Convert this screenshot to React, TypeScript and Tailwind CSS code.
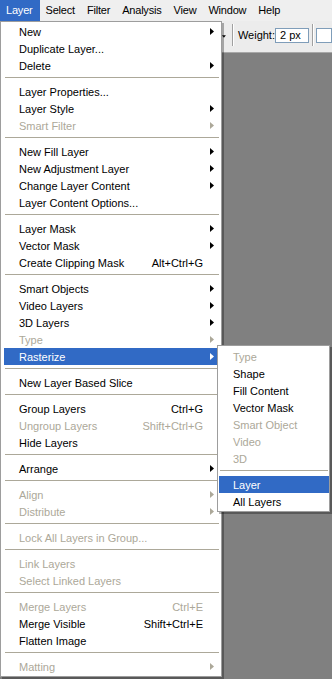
import React from "react";

type Item = { l: string; sub?: boolean; dis?: boolean; sc?: string; act?: boolean };

const mainMenu: Item[][] = [
  [{ l: "New", sub: true }, { l: "Duplicate Layer..." }, { l: "Delete", sub: true }],
  [{ l: "Layer Properties..." }, { l: "Layer Style", sub: true }, { l: "Smart Filter", sub: true, dis: true }],
  [
    { l: "New Fill Layer", sub: true },
    { l: "New Adjustment Layer", sub: true },
    { l: "Change Layer Content", sub: true },
    { l: "Layer Content Options..." },
  ],
  [{ l: "Layer Mask", sub: true }, { l: "Vector Mask", sub: true }, { l: "Create Clipping Mask", sc: "Alt+Ctrl+G" }],
  [
    { l: "Smart Objects", sub: true },
    { l: "Video Layers", sub: true },
    { l: "3D Layers", sub: true },
    { l: "Type", sub: true, dis: true },
    { l: "Rasterize", sub: true, act: true },
  ],
  [{ l: "New Layer Based Slice" }],
  [{ l: "Group Layers", sc: "Ctrl+G" }, { l: "Ungroup Layers", sc: "Shift+Ctrl+G", dis: true }, { l: "Hide Layers" }],
  [{ l: "Arrange", sub: true }],
  [{ l: "Align", sub: true, dis: true }, { l: "Distribute", sub: true, dis: true }],
  [{ l: "Lock All Layers in Group...", dis: true }],
  [{ l: "Link Layers", dis: true }, { l: "Select Linked Layers", dis: true }],
  [{ l: "Merge Layers", sc: "Ctrl+E", dis: true }, { l: "Merge Visible", sc: "Shift+Ctrl+E" }, { l: "Flatten Image" }],
  [{ l: "Matting", sub: true, dis: true }],
];

const subMenu: Item[][] = [
  [
    { l: "Type", dis: true },
    { l: "Shape" },
    { l: "Fill Content" },
    { l: "Vector Mask" },
    { l: "Smart Object", dis: true },
    { l: "Video", dis: true },
    { l: "3D", dis: true },
  ],
  [{ l: "Layer", act: true }, { l: "All Layers" }],
];

function Arrow({ color }: { color: string }) {
  return (
    <svg width="4" height="7" viewBox="0 0 4 7">
      <path d="M0 0L4 3.5L0 7Z" fill={color} />
    </svg>
  );
}

function MainRow({ it }: { it: Item }) {
  const color = it.act ? "text-white" : it.dis ? "text-[#aca899]" : "text-black";
  const arrowColor = it.act ? "#ffffff" : it.dis ? "#aca899" : "#000000";
  return (
    <div className={`flex h-[17px] items-center ml-[3px] mr-[4px] pl-[15px] ${it.act ? "bg-[#316ac5]" : ""} ${color}`}>
      <span className="flex-1 whitespace-nowrap pt-[2px] leading-[15px]">{it.l}</span>
      {it.sc && <span className="whitespace-nowrap pt-[2px] leading-[15px]">{it.sc}</span>}
      <span className="flex w-[14px] justify-end pr-[3px]">{it.sub && <Arrow color={arrowColor} />}</span>
    </div>
  );
}

function SubRow({ it }: { it: Item }) {
  const color = it.act ? "text-white" : it.dis ? "text-[#aca899]" : "text-black";
  return (
    <div className={`flex h-[17px] items-center ml-[1px] pl-[14px] ${it.act ? "bg-[#316ac5]" : ""} ${color}`}>
      <span className="whitespace-nowrap pt-[2px] leading-[15px]">{it.l}</span>
    </div>
  );
}

function Sep({ ml, mr }: { ml: string; mr: string }) {
  return (
    <div className={`pt-[3px] pb-[5px] ${ml} ${mr}`}>
      <div className="h-px bg-[#aca899]" />
    </div>
  );
}

export default function App() {
  const bar = ["Layer", "Select", "Filter", "Analysis", "View", "Window", "Help"];
  return (
    <div className="relative w-[332px] h-[679px] overflow-hidden bg-[#808080] text-[11px] font-['Liberation_Sans',Arial,sans-serif]">
      {/* menu bar */}
      <div className="flex h-[21px] items-stretch bg-[#efefef] tracking-[-0.2px]">
        {bar.map((b, i) => (
          <div
            key={b}
            className={`flex items-center ${i === 0 ? "bg-[#316ac5] pl-[6px] pr-[7px] text-white" : "px-[6px] text-black"}`}
          >
            {b}
          </div>
        ))}
      </div>
      {/* toolbar */}
      <div className="h-[32px] bg-[#ececec] border-b border-[#a8a8a8]">
        <div className="flex h-[28px] items-center pl-[222px]">
          <svg width="5" height="3" viewBox="0 0 5 3" className="mt-[2px]">
            <path d="M0 0H5L2.5 3Z" fill="#000" />
          </svg>
          <div className="ml-[6px] flex h-[22px]">
            <div className="w-px bg-[#a0a0a0]" />
            <div className="w-px bg-white" />
          </div>
          <span className="ml-[4px] w-[42px] text-black">Weight:</span>
          <div className="flex h-[15px] w-[42px] items-center border border-[#7f9db9] bg-white pl-[4px] text-black">
            2 px
          </div>
          <div className="ml-[3px] flex h-[22px]">
            <div className="w-px bg-[#a0a0a0]" />
            <div className="w-px bg-white" />
          </div>
          <div className="ml-[2px] h-[15px] w-[20px] border border-[#7f9db9] bg-white" />
        </div>
      </div>

      {/* main menu */}
      <div className="absolute left-0 top-[21px] w-[222px] border border-[#9d9d9d] bg-white pt-[1px] pb-[1px] shadow-[2px_2px_0_rgba(0,0,0,0.3)]">
        {mainMenu.map((grp, gi) => (
          <React.Fragment key={gi}>
            {gi > 0 && <Sep ml="ml-[4px]" mr="mr-[2px]" />}
            {grp.map((it) => (
              <MainRow key={it.l} it={it} />
            ))}
          </React.Fragment>
        ))}
      </div>

      {/* submenu */}
      <div className="absolute left-[217px] top-[345px] w-[113px] border border-[#9d9d9d] bg-white pt-[2px] pb-[1px] shadow-[2px_2px_0_rgba(0,0,0,0.3)]">
        {subMenu.map((grp, gi) => (
          <React.Fragment key={gi}>
            {gi > 0 && <Sep ml="ml-[2px]" mr="mr-[1px]" />}
            {grp.map((it) => (
              <SubRow key={it.l} it={it} />
            ))}
          </React.Fragment>
        ))}
      </div>
    </div>
  );
}
